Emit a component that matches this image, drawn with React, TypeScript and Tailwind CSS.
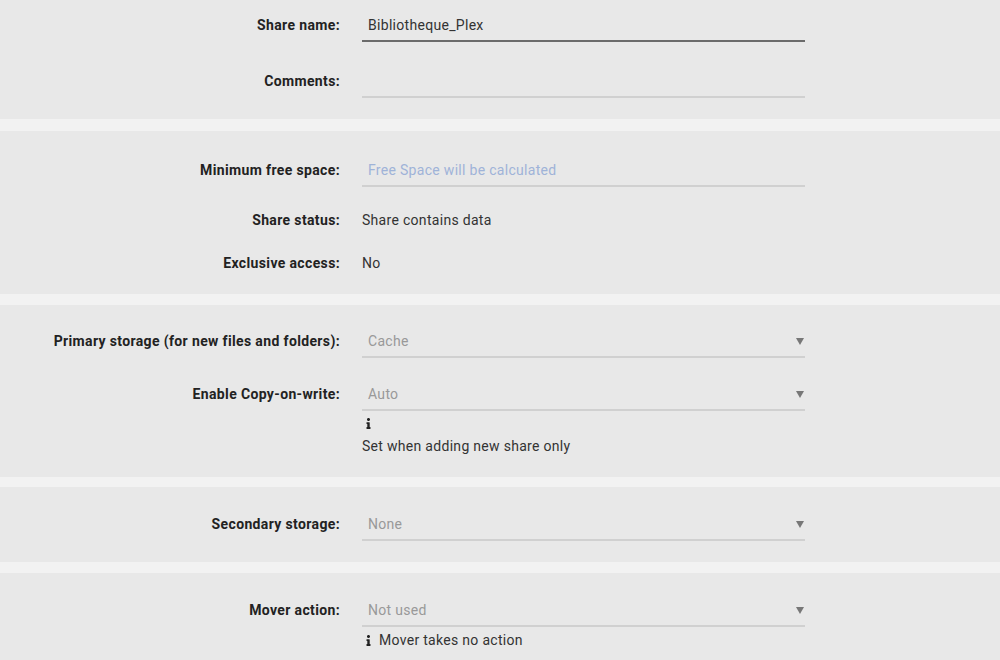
import { FaInfo } from "react-icons/fa";

const font = { fontFamily: "Roboto, 'Noto Sans', sans-serif" };

function Label({ children }: { children: React.ReactNode }) {
  return <div className="w-[340px] shrink-0 text-right text-[14px] font-bold tracking-[0.36px] text-[#222]">{children}</div>;
}

function Field({ label, children, className = "" }: { label: string; children: React.ReactNode; className?: string }) {
  return (
    <div className={`flex items-center gap-[22px] h-[34px] ${className}`}>
      <Label>{label}</Label>
      <div className="w-[443px] h-full">{children}</div>
    </div>
  );
}

function TextInput({ value, dark, blue }: { value?: string; dark?: boolean; blue?: boolean }) {
  return (
    <div
      className={`h-full flex items-center pt-[2px] px-[6px] border-b-2 text-[14px] tracking-[0.3px] ${dark ? "border-[#6b6b6b] text-[#333]" : "border-[#d0d0d0]"} ${blue ? "text-[#9fb3d8]" : ""}`}
    >
      {value}
    </div>
  );
}

function Select({ value }: { value: string }) {
  return (
    <div className="h-full flex items-center justify-between pt-[2px] pl-[6px] pr-[1px] border-b-2 border-[#d0d0d0] text-[14px] tracking-[0.3px] text-[#999]">
      <span>{value}</span>
      <svg width="8" height="7" viewBox="0 0 8 7">
        <path d="M0 0h8L4 7z" fill="#777" />
      </svg>
    </div>
  );
}

function Plain({ label, value, className = "" }: { label: string; value: string; className?: string }) {
  return (
    <div className={`flex items-center gap-[22px] h-[20px] ${className}`}>
      <Label>{label}</Label>
      <div className="text-[14px] tracking-[0.3px] text-[#333]">{value}</div>
    </div>
  );
}

export default function App() {
  return (
    <div className="w-[1000px] h-[660px] overflow-hidden bg-[#f2f2f2] flex flex-col" style={font}>
      <section className="bg-[#e8e8e8] h-[119px] pt-[8px]">
        <Field label="Share name:">
          <TextInput value="Bibliotheque_Plex" dark />
        </Field>
        <Field label="Comments:" className="mt-[22px]">
          <TextInput />
        </Field>
      </section>

      <section className="bg-[#e8e8e8] h-[163px] mt-[12px] pt-[22px]">
        <Field label="Minimum free space:">
          <TextInput value="Free Space will be calculated" blue />
        </Field>
        <Plain label="Share status:" value="Share contains data" className="mt-[23px]" />
        <Plain label="Exclusive access:" value="No" className="mt-[23px]" />
      </section>

      <section className="bg-[#e8e8e8] h-[172px] mt-[11px] pt-[19px]">
        <Field label="Primary storage (for new files and folders):">
          <Select value="Cache" />
        </Field>
        <Field label="Enable Copy-on-write:" className="mt-[19px]">
          <Select value="Auto" />
        </Field>
        <div className="pl-[362px]">
          <FaInfo className="mt-[7px] ml-[1px] text-[#222]" size={11} />
          <div className="mt-[7px] text-[14px] tracking-[0.3px] text-[#333]">Set when adding new share only</div>
        </div>
      </section>

      <section className="bg-[#e8e8e8] h-[75px] mt-[10px] pt-[20px]">
        <Field label="Secondary storage:">
          <Select value="None" />
        </Field>
      </section>

      <section className="bg-[#e8e8e8] flex-1 mt-[11px] pt-[20px]">
        <Field label="Mover action:">
          <Select value="Not used" />
        </Field>
        <div className="pl-[362px] mt-[3px] flex items-center gap-[5px] text-[14px] tracking-[0.3px] text-[#333]">
          <FaInfo className="ml-[1px] text-[#222]" size={11} />
          <span>Mover takes no action</span>
        </div>
      </section>
    </div>
  );
}
